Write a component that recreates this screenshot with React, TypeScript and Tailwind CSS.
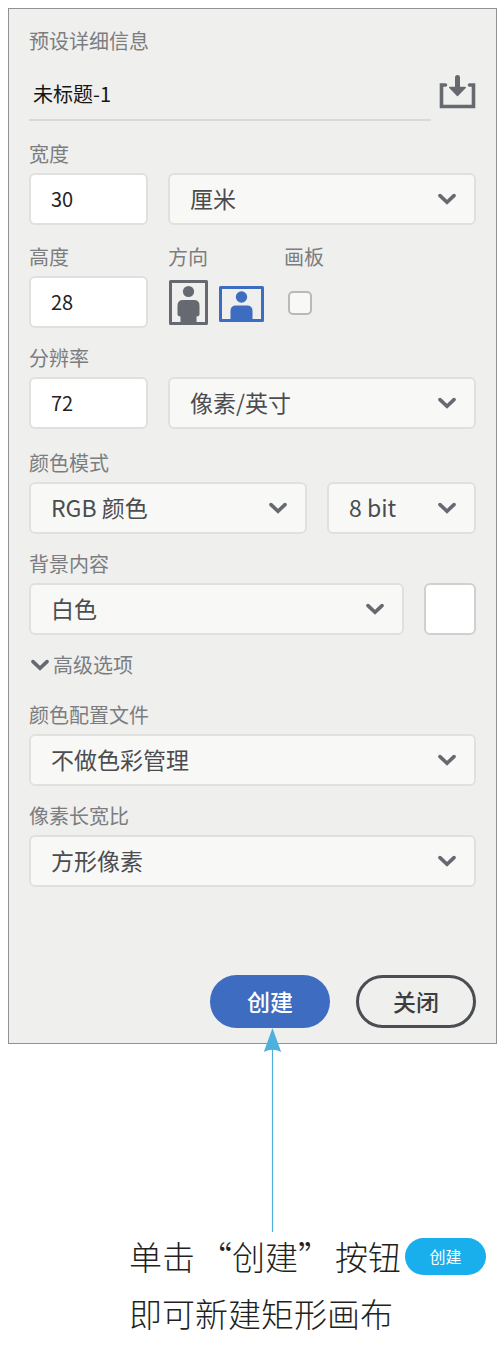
import React, { useState } from 'react';

const controlClass =
  'w-full h-[52px] rounded-md border-2 border-[#e0e0de] pb-0.5 outline-none focus:border-[#3d6cc0]';

function Chevron() {
  return (
    <svg width="18" height="12" viewBox="0 0 18 12" fill="none" aria-hidden="true">
      <path d="M2 2.6 L9 9.2 L16 2.6" stroke="#66696f" strokeWidth="3.6" strokeLinecap="round" />
    </svg>
  );
}

type FieldProps = {
  id: string;
  label: string;
  className?: string;
  children: React.ReactNode;
};

function Field({ id, label, className = '', children }: FieldProps) {
  return (
    <div className={className}>
      <label htmlFor={id} className="block mb-[5px] text-[20px] leading-7 text-[#7b7d80]">
        {label}
      </label>
      {children}
    </div>
  );
}

type SelectProps = {
  id: string;
  options: string[];
  label?: string;
};

function Select({ id, options, label }: SelectProps) {
  return (
    <div className="relative w-full">
      <select
        id={id}
        aria-label={label}
        className={`${controlClass} appearance-none bg-[#f8f9f6] pl-5 pr-10 text-[23px] text-[#4b4c50]`}
      >
        {options.map((option) => (
          <option key={option}>{option}</option>
        ))}
      </select>
      <span className="absolute right-5 inset-y-0 flex items-center pointer-events-none">
        <Chevron />
      </span>
    </div>
  );
}

function NumberInput({ id, initial }: { id: string; initial: string }) {
  const [value, setValue] = useState(initial);

  return (
    <input
      id={id}
      type="text"
      inputMode="numeric"
      value={value}
      onChange={(e) => setValue(e.target.value)}
      className={`${controlClass} bg-white pl-5 text-[20px] text-[#222326]`}
    />
  );
}

function SaveIcon() {
  return (
    <svg width="37" height="40" viewBox="0 0 37 40" fill="none" aria-hidden="true">
      <path d="M6.5 11 H2.5 V32.5 H34.5 V11 H30.5" stroke="#66696f" strokeWidth="3.6" strokeLinecap="round" />
      <path d="M18.5 3.5 V14" stroke="#66696f" strokeWidth="5" strokeLinecap="round" />
      <path d="M10.8 13.5 H26.2 L18.5 21.5 Z" fill="#66696f" stroke="#66696f" strokeWidth="1.5" strokeLinejoin="round" />
    </svg>
  );
}

function PortraitIcon() {
  return (
    <svg width="40" height="45" viewBox="0 0 40 45" aria-hidden="true">
      <rect x="2.5" y="1.5" width="36" height="42" fill="none" stroke="currentColor" strokeWidth="3" strokeLinejoin="round" />
      <circle cx="20.5" cy="11.5" r="5.6" fill="currentColor" />
      <path
        d="M15 20 H26 Q31.5 20 31.5 25.5 V34 Q31.5 36.5 28.5 36.5 V43 H12.5 V36.5 Q9.5 36.5 9.5 34 V25.5 Q9.5 20 15 20 Z"
        fill="currentColor"
      />
    </svg>
  );
}

function LandscapeIcon() {
  return (
    <svg width="45" height="39" viewBox="0 0 45 39" aria-hidden="true">
      <rect x="1.5" y="4.5" width="42" height="33" fill="none" stroke="currentColor" strokeWidth="3" strokeLinejoin="round" />
      <circle cx="22.5" cy="14" r="5.7" fill="currentColor" />
      <path d="M11.5 37 V28 Q11.5 22.5 17 22.5 H28 Q33.5 22.5 33.5 28 V37 Z" fill="currentColor" />
    </svg>
  );
}

function Orientation() {
  const [landscape, setLandscape] = useState(true);

  return (
    <div role="group" aria-labelledby="orientation">
      <div id="orientation" className="mb-[5px] text-[20px] leading-7 text-[#7b7d80]">
        方向
      </div>
      <div className="h-[52px] flex items-center gap-[11px]">
        <button
          type="button"
          aria-label="纵向"
          aria-pressed={!landscape}
          onClick={() => setLandscape(false)}
          className={landscape ? 'text-[#66696f]' : 'text-[#3d6cc0]'}
        >
          <PortraitIcon />
        </button>
        <button
          type="button"
          aria-label="横向"
          aria-pressed={landscape}
          onClick={() => setLandscape(true)}
          className={landscape ? 'text-[#3d6cc0]' : 'text-[#66696f]'}
        >
          <LandscapeIcon />
        </button>
      </div>
    </div>
  );
}

export default function App() {
  const [name, setName] = useState('未标题-1');
  const [advanced, setAdvanced] = useState(true);

  return (
    <main lang="zh-CN" className="pt-2 pl-2 pr-1 pb-2 bg-white font-['Noto_Sans_CJK_SC',sans-serif]">
      <form
        onSubmit={(e) => e.preventDefault()}
        className="border border-[#929292] bg-[#efefed] px-5 pt-[18px] pb-[15px]"
      >
        <h1 className="text-[20px] leading-7 text-[#7b7d80]">预设详细信息</h1>

        <div className="mt-3 flex items-center gap-2">
          <input
            type="text"
            aria-label="名称"
            value={name}
            onChange={(e) => setName(e.target.value)}
            className="flex-1 min-w-0 h-[54px] pl-1 border-b-2 border-[#d9d9d8] text-[20px] text-[#151515] outline-none"
          />
          <button type="button" aria-label="保存预设">
            <SaveIcon />
          </button>
        </div>

        <div className="mt-[19px] flex items-end gap-5">
          <Field id="width" label="宽度" className="w-[119px]">
            <NumberInput id="width" initial="30" />
          </Field>
          <div className="flex-1">
            <Select id="unit" label="单位" options={['厘米', '像素', '英寸', '毫米']} />
          </div>
        </div>

        <div className="mt-[18px] flex gap-5">
          <Field id="height" label="高度" className="w-[119px]">
            <NumberInput id="height" initial="28" />
          </Field>
          <Orientation />
          <Field id="artboard" label="画板">
            <div className="h-[52px] pt-0.5 pl-1 flex items-center">
              <input
                id="artboard"
                type="checkbox"
                className="appearance-none size-6 rounded-[5px] border-2 border-[#b9b9b9] bg-[#f8f9f6] checked:bg-[#3d6cc0]"
              />
            </div>
          </Field>
        </div>

        <div className="mt-4 flex items-end gap-5">
          <Field id="resolution" label="分辨率" className="w-[119px]">
            <NumberInput id="resolution" initial="72" />
          </Field>
          <div className="flex-1">
            <Select id="resolution-unit" label="分辨率单位" options={['像素/英寸', '像素/厘米']} />
          </div>
        </div>

        <div className="mt-5 flex items-end gap-5">
          <Field id="mode" label="颜色模式" className="flex-1">
            <Select id="mode" options={['RGB 颜色', 'CMYK 颜色', '灰度']} />
          </Field>
          <div className="w-[149px]">
            <Select id="depth" label="位深度" options={['8 bit', '16 bit', '32 bit']} />
          </div>
        </div>

        <div className="mt-4 flex items-end gap-5">
          <Field id="background" label="背景内容" className="flex-1">
            <Select id="background" options={['白色', '黑色', '透明']} />
          </Field>
          <button
            type="button"
            aria-label="背景颜色"
            className="size-[52px] rounded-md border-2 border-[#d0d0cf] bg-white"
          />
        </div>

        <button
          type="button"
          aria-expanded={advanced}
          onClick={() => setAdvanced(!advanced)}
          className="mt-4 pl-0.5 flex items-center gap-1 text-[20px] leading-7 text-[#7b7d80]"
        >
          <Chevron />
          高级选项
        </button>

        {advanced && (
          <>
            <Field id="profile" label="颜色配置文件" className="mt-[22px]">
              <Select id="profile" options={['不做色彩管理', 'sRGB IEC61966-2.1']} />
            </Field>
            <Field id="ratio" label="像素长宽比" className="mt-4">
              <Select id="ratio" options={['方形像素', 'D1/DV PAL']} />
            </Field>
          </>
        )}

        <div className="mt-22 flex justify-end gap-[26px]">
          <div className="relative">
            <button
              type="submit"
              className="w-[120px] h-[53px] rounded-full bg-[#3d6cc0] text-[23px] font-medium text-white"
            >
              创建
            </button>
            {/* callout arrow from the caption up to the button */}
            <svg
              className="absolute top-full left-1/2 -translate-x-1/2 pointer-events-none"
              width="24"
              height="204"
              viewBox="0 0 24 204"
              aria-hidden="true"
            >
              <path d="M14.5 20 V204" stroke="#4db1dc" strokeWidth="1.2" />
              <path d="M14.5 0 L23.2 24 Q14.5 19.5 5.8 24 Z" fill="#4db1dc" />
            </svg>
          </div>
          <button
            type="button"
            className="w-[120px] h-[53px] rounded-full border-3 border-[#4a4d52] text-[23px] font-medium text-[#3c3d41]"
          >
            关闭
          </button>
        </div>
      </form>

      <div className="mt-[184px] pl-[121px] text-[33px] leading-[57px] font-light text-[#231f20]">
        <div className="flex items-center gap-1 whitespace-nowrap">
          <span>单击</span>
          <span>“创建”</span>
          <span>按钮</span>
          <span className="w-[81px] h-[37px] rounded-full bg-[#19aeec] text-center text-[16px] leading-[37px] font-normal text-white">
            创建
          </span>
        </div>
        <p>即可新建矩形画布</p>
      </div>
    </main>
  );
}
